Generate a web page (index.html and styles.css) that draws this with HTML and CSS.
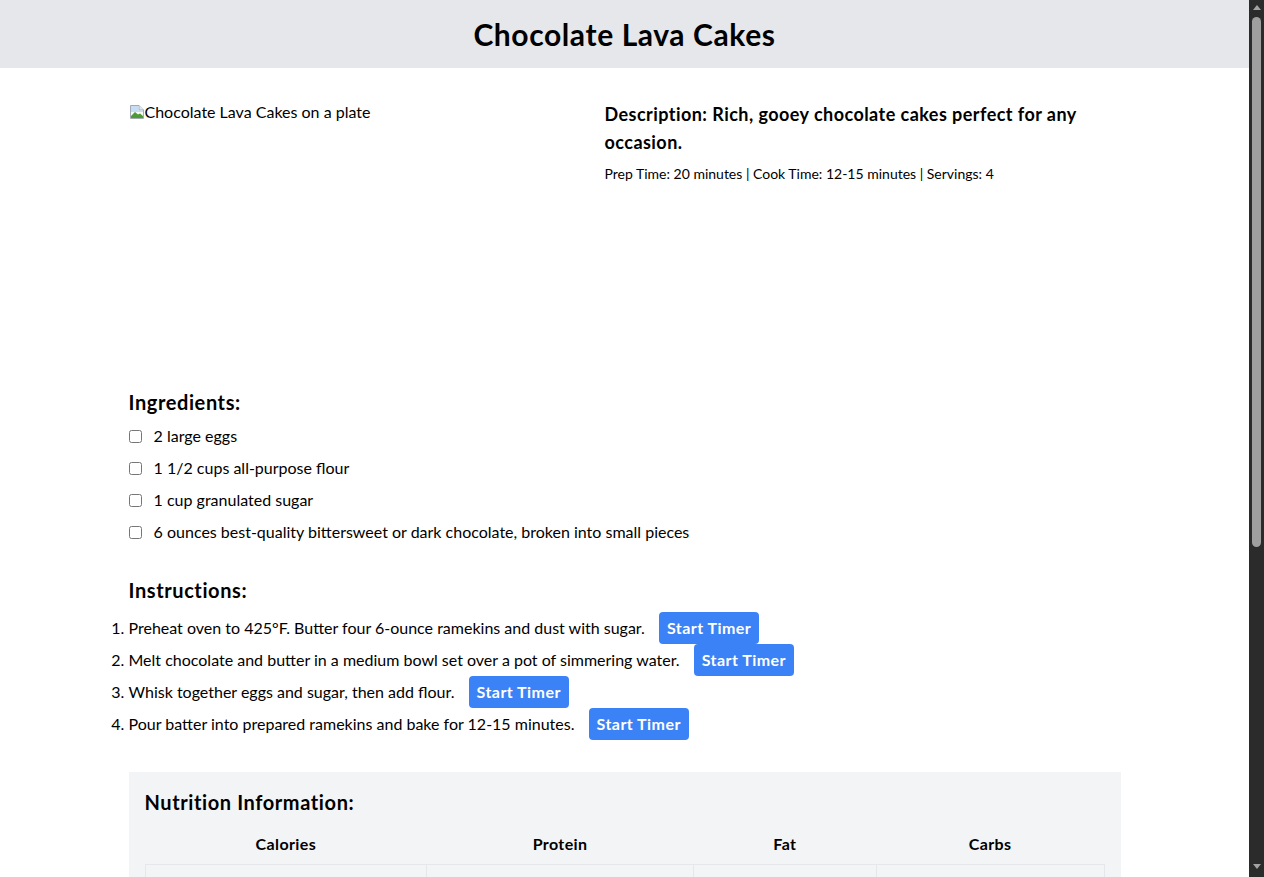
FILE: index.html
```html
<!DOCTYPE html>
<html lang="en">
<head>
    <meta charset="UTF-8">
    <meta name="viewport" content="width=device-width, initial-scale=1.0">
    <title>Chocolate Lava Cakes</title>
    <link rel="stylesheet" href="styles.css">
</head>
<body>
    <header class="site-header">
        <h1>Chocolate Lava Cakes</h1>
    </header>

    <main class="container">
        <section class="recipe-top">
            <div class="recipe-photo">
                <!-- photo placeholder: broken image glyph + alt text -->
                <svg class="broken-icon" width="16" height="16" viewBox="0 0 16 16">
                    <path d="M1.5 1.5h8.5l4.5 4.5v8.5h-13z" fill="#f7f9fb" stroke="#a2abb5"/>
                    <path d="M10 1.5v4.5h4.5" fill="#e6ebf0" stroke="#a2abb5"/>
                    <path d="M2 2h7.5v4.5H14V8H2z" fill="#c6ddf3"/>
                    <path d="M2 12l4-4 3 2.5 2-1 3 2.5V14H2z" fill="#4e9a35"/>
                </svg><span class="photo-alt">Chocolate Lava Cakes on a plate</span>
            </div>
            <div class="recipe-summary">
                <h2 class="description">Description: Rich, gooey chocolate cakes perfect for any occasion.</h2>
                <p class="meta">Prep Time: 20 minutes | Cook Time: 12-15 minutes | Servings: 4</p>
            </div>
        </section>

        <section class="block">
            <h3 class="block-title">Ingredients:</h3>
            <ul class="ingredients">
                <li><label><input type="checkbox"> 2 large eggs</label></li>
                <li><label><input type="checkbox"> 1 1/2 cups all-purpose flour</label></li>
                <li><label><input type="checkbox"> 1 cup granulated sugar</label></li>
                <li><label><input type="checkbox"> 6 ounces best-quality bittersweet or dark chocolate, broken into small pieces</label></li>
            </ul>
        </section>

        <section class="block">
            <h3 class="block-title">Instructions:</h3>
            <ol class="steps">
                <li>Preheat oven to 425°F. Butter four 6-ounce ramekins and dust with sugar. <button class="timer-btn">Start Timer</button></li>
                <li>Melt chocolate and butter in a medium bowl set over a pot of simmering water. <button class="timer-btn">Start Timer</button></li>
                <li>Whisk together eggs and sugar, then add flour. <button class="timer-btn">Start Timer</button></li>
                <li>Pour batter into prepared ramekins and bake for 12-15 minutes. <button class="timer-btn">Start Timer</button></li>
            </ol>
        </section>

        <section class="nutrition">
            <h3 class="block-title">Nutrition Information:</h3>
            <table class="nutrition-table">
                <thead>
                    <tr>
                        <th class="col-cal">Calories</th>
                        <th class="col-pro">Protein</th>
                        <th class="col-fat">Fat</th>
                        <th class="col-carb">Carbs</th>
                    </tr>
                </thead>
                <tbody>
                    <tr>
                        <td>450 kcal</td>
                        <td>7 g</td>
                        <td>28 g</td>
                        <td>46 g</td>
                    </tr>
                </tbody>
            </table>
        </section>

        <section class="block">
            <h3 class="block-title">Notes:</h3>
            <p class="notes">The centers should still be soft when you take the cakes out of the oven. Let them rest for a minute, then run a knife around the edges and invert onto plates.</p>
        </section>

        <section class="block">
            <h3 class="block-title">Comments:</h3>
            <textarea class="comment-box" placeholder="Leave a comment..."></textarea>
            <button class="submit-btn">Submit</button>
        </section>
    </main>

    <!-- window scrollbar -->
    <div class="scrollbar">
        <span class="arrow arrow-up"></span>
        <span class="thumb"></span>
        <span class="arrow arrow-down"></span>
    </div>
</body>
</html>
```

FILE: styles.css
```css
* {
    box-sizing: border-box;
    margin: 0;
    padding: 0;
}

body {
    font-family: Lato, 'Liberation Sans', sans-serif;
    font-size: 16px;
    line-height: 24px;
    color: #000;
    background: #fff;
    margin-right: 15px;
}

.site-header {
    background: #e5e7eb;
    padding: 16px;
    text-align: center;
}

.site-header h1 {
    font-size: 30px;
    line-height: 36px;
    font-weight: 700;
    letter-spacing: 0.6px;
}

.container {
    max-width: 1024px;
    margin: 0 auto;
    padding: 32px 16px 40px;
}

.recipe-top {
    display: grid;
    grid-template-columns: 460px 1fr;
    gap: 16px;
    margin-bottom: 32px;
}

.recipe-photo {
    height: 256px;
}

.broken-icon {
    vertical-align: -2px;
}

.description {
    font-size: 18px;
    line-height: 28px;
    font-weight: 700;
    letter-spacing: 0.45px;
    margin-bottom: 8px;
}

.meta {
    font-size: 14px;
    line-height: 20px;
}

.block {
    margin-bottom: 32px;
}

.block-title {
    font-size: 20px;
    line-height: 28px;
    font-weight: 700;
    letter-spacing: 0.6px;
    margin-bottom: 8px;
}

.ingredients {
    list-style: none;
}

.ingredients li + li {
    margin-top: 8px;
}

.ingredients input {
    width: 13px;
    height: 13px;
    margin: 0 8px 0 0;
    vertical-align: -1px;
}

.steps {
    list-style: decimal;
}

.steps li {
    line-height: 32px;
}

.timer-btn {
    font: inherit;
    font-weight: 700;
    line-height: 24px;
    letter-spacing: 0.45px;
    background: #3b82f6;
    color: #fff;
    border: none;
    border-radius: 4px;
    padding: 4px 8px;
    margin-left: 10px;
    cursor: pointer;
}

.nutrition {
    background: #f3f4f6;
    padding: 16px;
    margin-bottom: 32px;
}

.nutrition-table {
    width: 100%;
    border-collapse: collapse;
}

.nutrition-table th {
    padding: 8px 16px;
    font-weight: 700;
    letter-spacing: 0.4px;
    text-align: center;
}

.nutrition-table td {
    border: 1px solid #e5e7eb;
    padding: 8px 16px;
    text-align: center;
}

.col-cal { width: 282px; }
.col-pro { width: 267px; }
.col-fat { width: 183px; }
.col-carb { width: 228px; }

.notes {
    line-height: 24px;
}

.comment-box {
    display: block;
    width: 100%;
    height: 96px;
    border: 1px solid #d1d5db;
    border-radius: 4px;
    padding: 8px;
    font: inherit;
    margin-bottom: 8px;
}

.submit-btn {
    font: inherit;
    font-weight: 700;
    background: #3b82f6;
    color: #fff;
    border: none;
    border-radius: 4px;
    padding: 4px 12px;
}

.scrollbar {
    position: fixed;
    top: 0;
    right: 0;
    width: 15px;
    height: 100vh;
    background: #2b2b2b;
    display: flex;
    flex-direction: column;
    align-items: center;
}

.arrow {
    width: 0;
    height: 0;
    border-left: 4px solid transparent;
    border-right: 4px solid transparent;
}

.arrow-up {
    margin-top: 5px;
    border-bottom: 5px solid #a3a3a3;
}

.arrow-down {
    margin-top: auto;
    margin-bottom: 8px;
    border-top: 5px solid #a3a3a3;
}

.thumb {
    width: 9px;
    height: 530px;
    margin-top: 7px;
    background: #9f9f9f;
    border-radius: 5px;
}
```
